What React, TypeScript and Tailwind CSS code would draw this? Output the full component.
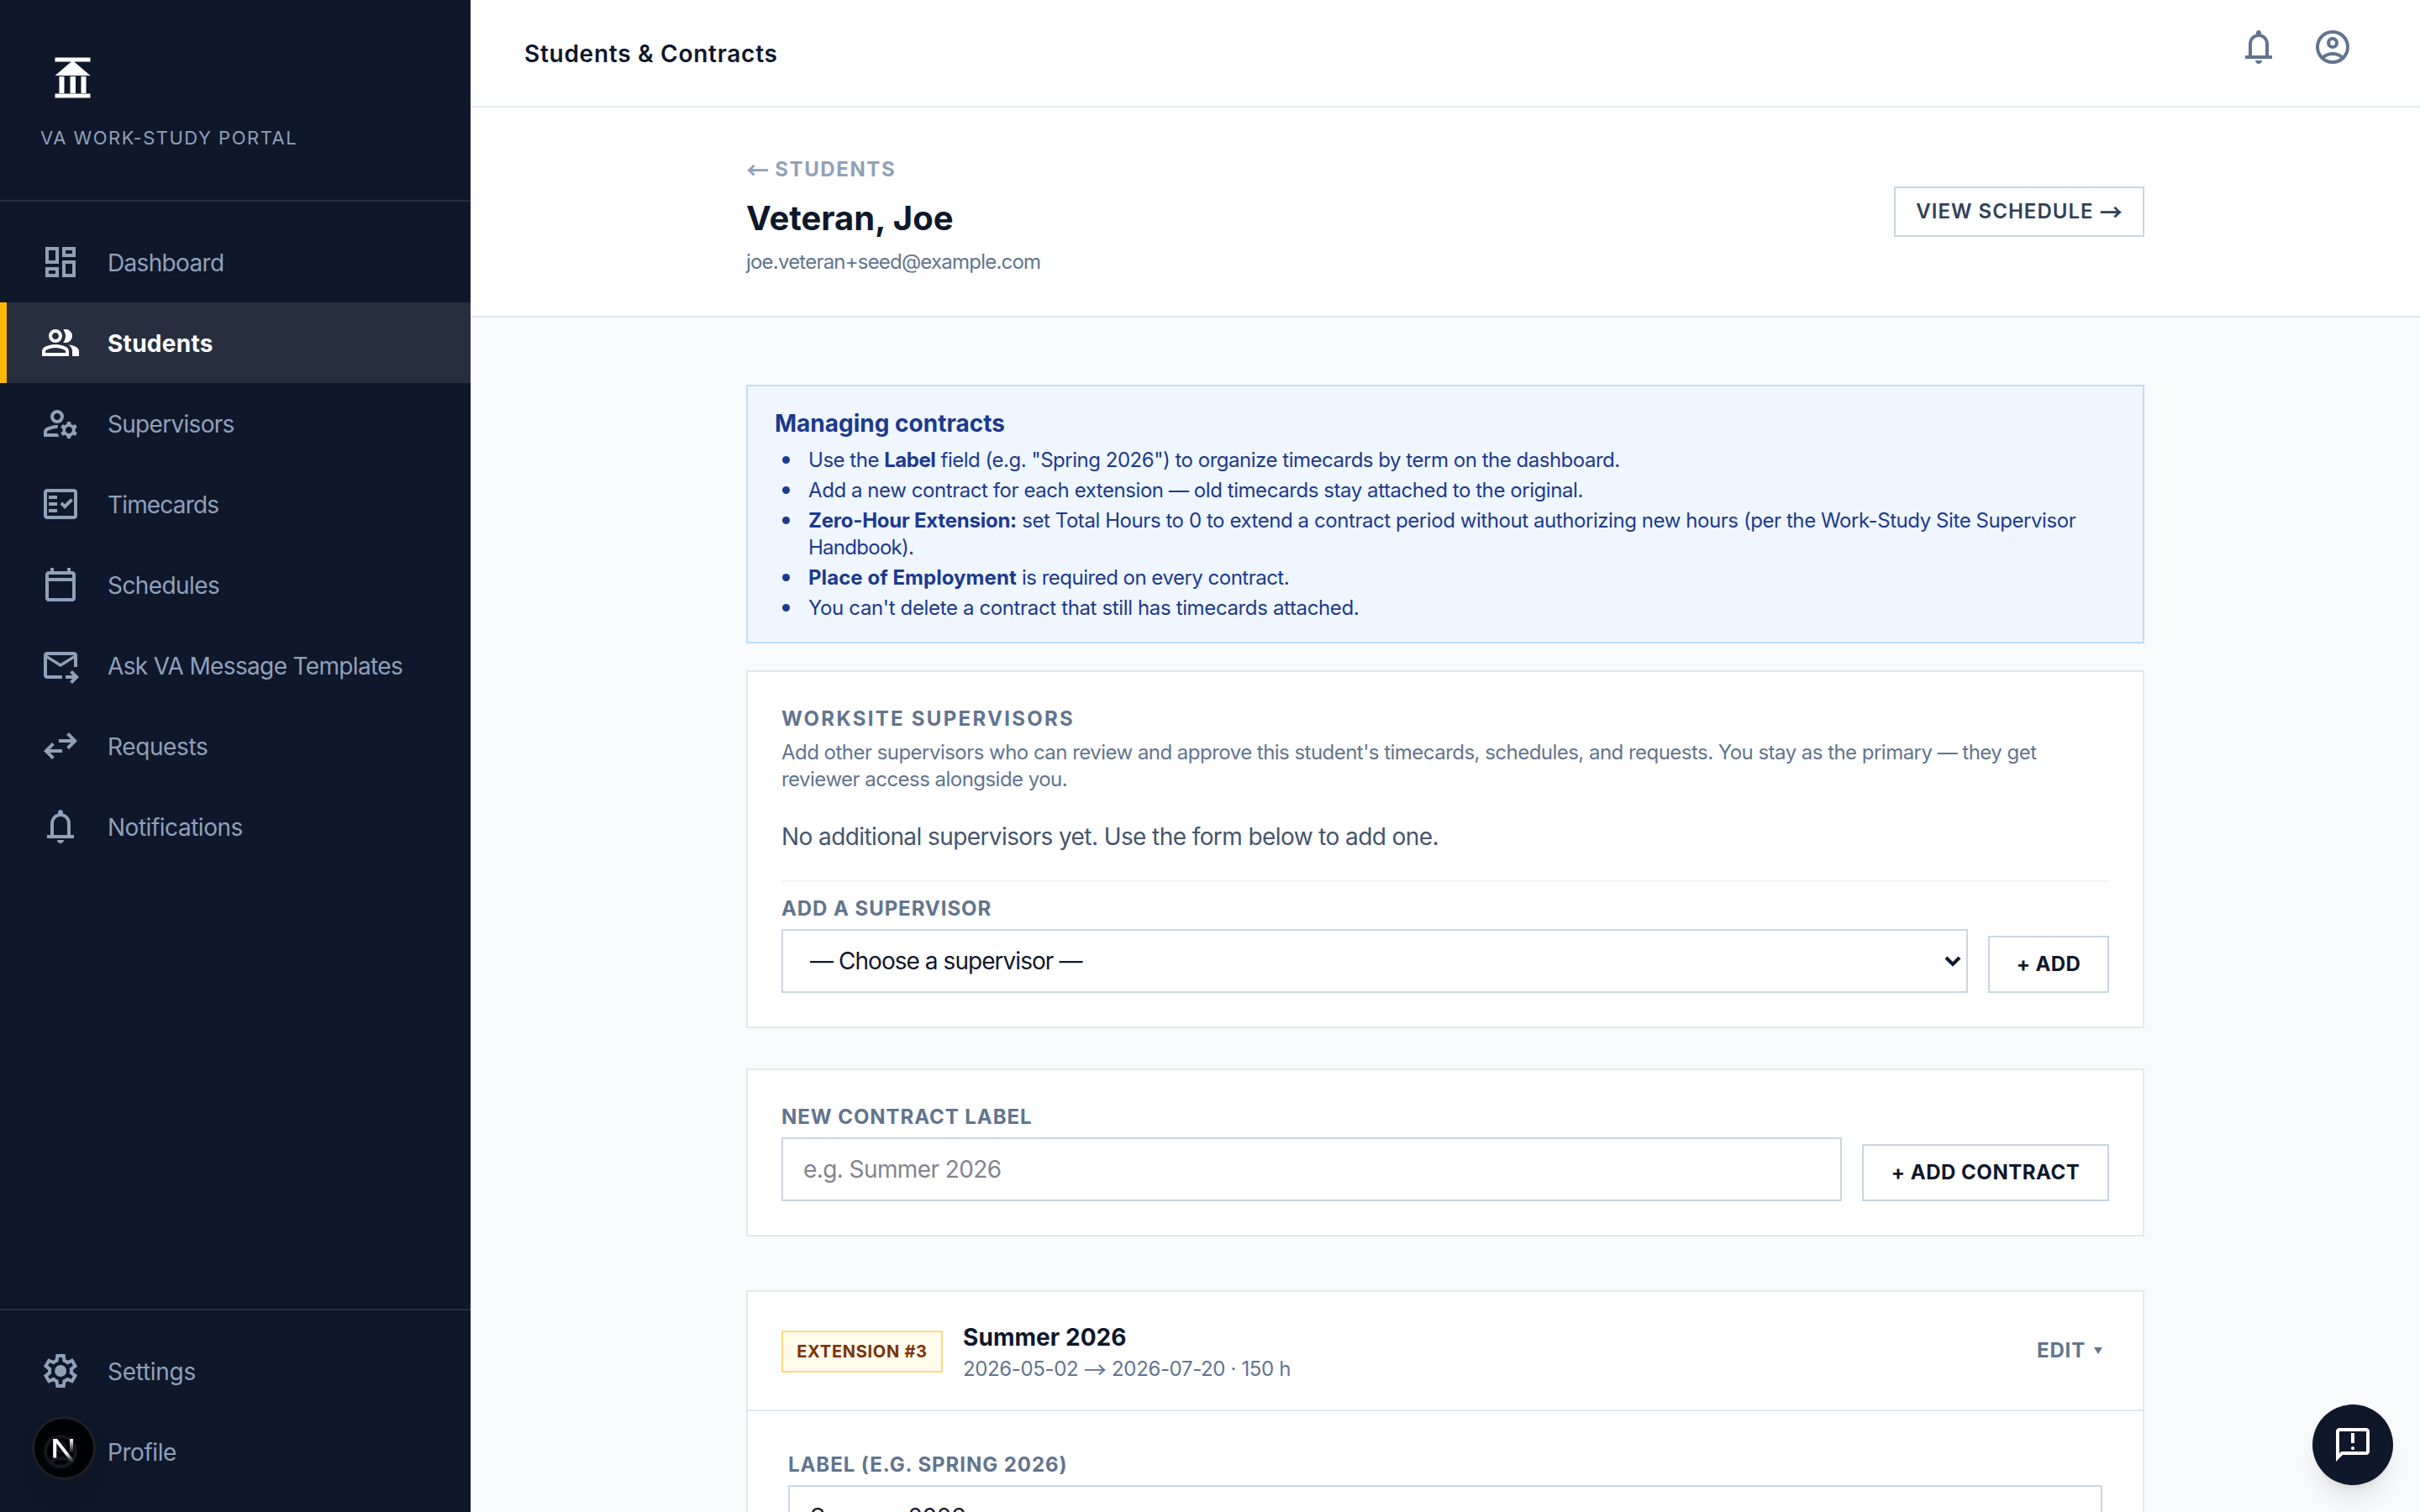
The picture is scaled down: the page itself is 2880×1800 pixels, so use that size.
import type { ReactNode } from "react";
import clsx from "clsx";

// Material Symbols paths, all drawn on the "0 -960 960 960" grid
const ICONS = {
  dashboard:
    "M520-600v-240h320v240H520ZM120-440v-400h320v400H120Zm400 320v-400h320v400H520Zm-400 0v-240h320v240H120Zm80-400h160v-240H200v240Zm400 320h160v-240H600v240Zm0-480h160v-80H600v80ZM200-200h160v-80H200v80Z",
  group:
    "M40-160v-112q0-34 17.5-62.5T104-378q62-31 126-46.5T360-440q66 0 130 15.5T616-378q29 15 46.5 43.5T680-272v112H40Zm720 0v-120q0-44-24.5-84.5T666-434q51 6 96 20.5t84 35.5q36 20 55 44.5t19 53.5v120H760ZM360-480q-66 0-113-47t-47-113q0-66 47-113t113-47q66 0 113 47t47 113q0 66-47 113t-113 47Zm400-160q0 66-47 113t-113 47q-11 0-28-2.5t-28-5.5q27-32 41.5-71t14.5-81q0-42-14.5-81T544-792q14-5 28-6.5t28-1.5q66 0 113 47t47 113ZM120-240h480v-32q0-11-5.5-20T580-306q-54-27-109-40.5T360-360q-56 0-111 13.5T140-306q-9 5-14.5 14t-5.5 20v32Zm240-320q33 0 56.5-23.5T440-640q0-33-23.5-56.5T360-720q-33 0-56.5 23.5T280-640q0 33 23.5 56.5T360-560Z",
  manageAccounts:
    "M400-480q-66 0-113-47t-47-113q0-66 47-113t113-47q66 0 113 47t47 113q0 66-47 113t-113 47ZM80-160v-112q0-33 17-62t47-44q51-26 115-44t141-18h14q6 0 12 2-8 18-13.5 37.5T404-360h-4q-71 0-127.5 18T180-306q-9 5-14.5 14t-5.5 20v32h252q6 21 16 41.5t22 38.5H80Zm560 40-12-60q-12-5-22.5-10.5T584-204l-58 18-40-68 46-40q-2-14-2-26t2-26l-46-40 40-68 58 18q11-8 21.5-13.5T628-460l12-60h80l12 60q12 5 22.5 11t21.5 15l58-20 40 70-46 40q2 12 2 25t-2 25l46 40-40 68-58-18q-11 8-21.5 13.5T732-180l-12 60h-80Zm40-120q33 0 56.5-23.5T760-320q0-33-23.5-56.5T680-400q-33 0-56.5 23.5T600-320q0 33 23.5 56.5T680-240ZM400-560q33 0 56.5-23.5T480-640q0-33-23.5-56.5T400-720q-33 0-56.5 23.5T320-640q0 33 23.5 56.5T400-560Z",
  factCheck:
    "M160-120q-33 0-56.5-23.5T80-200v-560q0-33 23.5-56.5T160-840h640q33 0 56.5 23.5T880-760v560q0 33-23.5 56.5T800-120H160Zm0-80h640v-560H160v560Zm40-80h200v-80H200v80Zm382-80 198-198-57-57-141 142-57-57-56 57 113 113Zm-382-80h200v-80H200v80Zm0-160h200v-80H200v80Z",
  calendar:
    "M200-80q-33 0-56.5-23.5T120-160v-560q0-33 23.5-56.5T200-800h40v-80h80v80h320v-80h80v80h40q33 0 56.5 23.5T840-720v560q0 33-23.5 56.5T760-80H200Zm0-80h560v-400H200v400Zm0-480h560v-80H200v80Z",
  forwardInbox:
    "M160-160q-33 0-56.5-23.5T80-240v-480q0-33 23.5-56.5T160-800h640q33 0 56.5 23.5T880-720v280h-80v-200L480-440 160-640v400h360v80H160Zm320-360 320-200H160l320 200ZM760-40l-56-56 63-64H600v-80h167l-64-64 57-56 160 160L760-40Z",
  syncAlt:
    "M280-160 80-360l200-200 56 57-103 103h287v80H233l103 103-56 57Zm400-240-56-57 103-103H440v-80h287L624-743l56-57 200 200-200 200Z",
  bell: "M160-200v-80h80v-280q0-83 50-147.5T420-792v-28q0-25 17.5-42.5T480-880q25 0 42.5 17.5T540-820v28q80 20 130 84.5T720-560v280h80v80H160Zm320 120q-33 0-56.5-23.5T400-160h160q0 33-23.5 56.5T480-80ZM320-280h320v-280q0-66-47-113t-113-47q-66 0-113 47t-47 113v280Z",
  settings:
    "m370-80-16-128q-13-5-24.5-12T307-235l-119 50L78-375l103-78q-1-7-1-13.5v-27q0-6.5 1-13.5L78-585l110-190 119 50q11-8 23-15t24-12l16-128h220l16 128q13 5 24.5 12t22.5 15l119-50 110 190-103 78q1 7 1 13.5v27q0 6.5-2 13.5l103 78-110 190-118-50q-11 8-23 15t-24 12L590-80H370Zm70-80h79l14-106q31-8 57.5-23.5T639-327l99 41 39-68-86-65q5-14 7-29.5t2-31.5q0-16-2-31.5t-7-29.5l86-65-39-68-99 42q-22-23-48.5-38.5T533-694l-13-106h-79l-14 106q-31 8-57.5 23.5T321-633l-99-41-39 68 86 64q-5 15-7 30t-2 32q0 16 2 31t7 30l-86 65 39 68 99-42q22 23 48.5 38.5T427-266l13 106Zm42-180q58 0 99-41t41-99q0-58-41-99t-99-41q-59 0-99.5 41T342-480q0 58 40.5 99t99.5 41Z",
  account:
    "M234-276q51-39 114-61.5T480-360q69 0 132 22.5T726-276q35-41 54.5-93T800-480q0-133-93.5-226.5T480-800q-133 0-226.5 93.5T160-480q0 59 19.5 111t54.5 93Zm246-164q-59 0-99.5-40.5T340-580q0-59 40.5-99.5T480-720q59 0 99.5 40.5T620-580q0 59-40.5 99.5T480-440Zm0 360q-83 0-156-31.5T197-197q-54-54-85.5-127T80-480q0-83 31.5-156T197-763q54-54 127-85.5T480-880q83 0 156 31.5T763-763q54 54 85.5 127T880-480q0 83-31.5 156T763-197q-54 54-127 85.5T480-80Zm0-80q53 0 100-15.5t86-44.5q-39-29-86-44.5T480-280q-53 0-100 15.5T294-220q39 29 86 44.5T480-160Zm0-360q26 0 43-17t17-43q0-26-17-43t-43-17q-26 0-43 17t-17 43q0 26 17 43t43 17Z",
  feedback:
    "M480-360q17 0 28.5-11.5T520-400q0-17-11.5-28.5T480-440q-17 0-28.5 11.5T440-400q0 17 11.5 28.5T480-360Zm-40-160h80v-240h-80v240ZM80-80v-720q0-33 23.5-56.5T160-880h640q33 0 56.5 23.5T880-800v480q0 33-23.5 56.5T800-240H240L80-80Zm126-240h594v-480H160v525l46-45Z",
};

type IconName = keyof typeof ICONS;

function Icon({ name }: { name: IconName }) {
  return (
    <svg viewBox="0 -960 960 960" className="size-12 shrink-0 fill-current">
      <path d={ICONS[name]} />
    </svg>
  );
}

const NAV: { label: string; icon: IconName; tracking: string }[] = [
  { label: "Dashboard", icon: "dashboard", tracking: "tracking-[-0.024em]" },
  { label: "Students", icon: "group", tracking: "tracking-[0.01em]" },
  { label: "Supervisors", icon: "manageAccounts", tracking: "tracking-[-0.025em]" },
  { label: "Timecards", icon: "factCheck", tracking: "tracking-[-0.03em]" },
  { label: "Schedules", icon: "calendar", tracking: "tracking-[-0.021em]" },
  { label: "Ask VA Message Templates", icon: "forwardInbox", tracking: "tracking-[-0.023em]" },
  { label: "Requests", icon: "syncAlt", tracking: "tracking-[-0.014em]" },
  { label: "Notifications", icon: "bell", tracking: "tracking-[-0.017em]" },
];

const FOOTER_NAV: { label: string; icon: IconName; tracking: string }[] = [
  { label: "Settings", icon: "settings", tracking: "tracking-[-0.01em]" },
  { label: "Profile", icon: "account", tracking: "tracking-[-0.016em]" },
];

function NavItem({ label, icon, tracking, active }: { label: string; icon: IconName; tracking: string; active?: boolean }) {
  return (
    <a
      className={clsx(
        "flex h-24 items-center gap-8 border-l-8 pl-10 text-[28px]",
        active ? "border-amber-400 bg-white/10 font-bold text-white" : "border-transparent text-slate-400"
      )}
    >
      <Icon name={icon} />
      <span className={clsx("pt-0.5", tracking)}>{label}</span>
    </a>
  );
}

function Sidebar() {
  return (
    <aside className="flex w-[560px] shrink-0 flex-col bg-slate-900">
      <div className="flex h-60 flex-col border-b-2 border-white/10 px-12 pt-[60px]">
        <svg viewBox="0 0 64 64" className="ml-1.5 size-16 fill-white">
          <rect x="11.5" y="8.5" width="42" height="5" />
          <path d="M32.5 12 53.5 30H11.5Z" />
          <rect x="16.5" y="31" width="6" height="20" />
          <rect x="29.5" y="31" width="6.5" height="20" />
          <rect x="42.5" y="31" width="6" height="20" />
          <rect x="11.5" y="51.5" width="42" height="5" />
        </svg>
        <p className="mt-6 text-[22px] leading-8 tracking-[0.068em] text-slate-400">VA WORK-STUDY PORTAL</p>
      </div>
      <nav className="flex-1 pt-6">
        {NAV.map((item) => (
          <NavItem key={item.label} {...item} active={item.label === "Students"} />
        ))}
      </nav>
      <div className="border-t-2 border-white/10 py-6">
        {FOOTER_NAV.map((item) => (
          <NavItem key={item.label} {...item} />
        ))}
      </div>
    </aside>
  );
}

function TopBar() {
  return (
    <header className="flex h-32 shrink-0 justify-between border-b-2 border-slate-200 bg-white pr-20 pl-16 text-slate-500">
      <h1 className="self-center pt-0.5 text-[28px] font-semibold tracking-[0.026em] text-slate-900">Students &amp; Contracts</h1>
      <div className="flex gap-10 pt-8">
        <Icon name="bell" />
        <Icon name="account" />
      </div>
    </header>
  );
}

// Inter's own arrows are too short, so borrow the full-width ones
function Arrow({ children }: { children: ReactNode }) {
  return (
    <span className="align-[-3px] font-['Noto_Sans_CJK_JP',sans-serif] text-[27px] leading-none tracking-normal">{children}</span>
  );
}

function PageHeader() {
  return (
    <section className="h-[250px] shrink-0 border-b-2 border-slate-200 bg-white">
      <div className="mx-auto flex w-[1664px] items-center justify-between pt-12">
        <div className="pt-2.5">
          <a className="block h-8 text-2xl leading-8 font-bold tracking-[0.066em] text-slate-400">
            <Arrow>←</Arrow> STUDENTS
          </a>
          <h2 className="mt-3.5 text-[40px] leading-[56px] font-bold text-slate-900">Veteran, Joe</h2>
          <p className="mt-2 text-2xl leading-8 tracking-[-0.033em] text-slate-500">joe.veteran+seed@example.com</p>
        </div>
        <button className="h-[60px] w-[298px] border-2 border-slate-300 text-2xl leading-8 font-semibold tracking-[0.043em] whitespace-nowrap text-slate-700">
          VIEW SCHEDULE <Arrow>→</Arrow>
        </button>
      </div>
    </section>
  );
}

function Tip({ className, children }: { className?: string; children: ReactNode }) {
  return (
    <li
      className={clsx(
        "before:mr-[22px] before:-ml-[31px] before:inline-block before:size-[9px] before:rounded-full before:bg-blue-900 before:align-[4px]",
        className
      )}
    >
      {children}
    </li>
  );
}

function ManagingInfo() {
  return (
    <div className="border-2 border-blue-200 bg-blue-50 px-8 py-6 text-blue-900">
      <h3 className="text-[28px] leading-10 font-bold">Managing contracts</h3>
      <ul className="mt-2 space-y-1 pl-10 text-2xl leading-8 tracking-[-0.018em]">
        <Tip className="tracking-[-0.02em]">
          Use the <b>Label</b> field (e.g. "Spring 2026") to organize timecards by term on the dashboard.
        </Tip>
        <Tip>Add a new contract for each extension — old timecards stay attached to the original.</Tip>
        <Tip>
          <b className="tracking-[-0.01em]">Zero-Hour Extension:</b> set Total Hours to 0 to extend a contract period without
          authorizing new hours (per the Work-Study Site Supervisor
          <br />
          <span className="tracking-[-0.03em]">Handbook).</span>
        </Tip>
        <Tip className="tracking-[-0.021em]">
          <b className="tracking-[0.002em]">Place of Employment</b> is required on every contract.
        </Tip>
        <Tip className="tracking-[-0.015em]">You can't delete a contract that still has timecards attached.</Tip>
      </ul>
    </div>
  );
}

function FieldLabel({ children }: { children: ReactNode }) {
  return <div className="mb-2 text-2xl leading-8 font-bold tracking-[0.039em] text-slate-500">{children}</div>;
}

function OutlineButton({ className, children }: { className: string; children: ReactNode }) {
  return (
    <button
      className={clsx(
        "flex h-[68px] shrink-0 items-center justify-center border-2 border-slate-300 bg-white text-2xl font-bold text-slate-900",
        className
      )}
    >
      {children}
    </button>
  );
}

function WorksiteSupervisors() {
  return (
    <div className="mt-8 border-2 border-slate-200 bg-white p-10">
      <h3 className="text-2xl leading-8 font-bold tracking-[0.095em] text-slate-500">WORKSITE SUPERVISORS</h3>
      <p className="mt-2 text-2xl leading-8 tracking-[-0.022em] text-slate-500">
        Add other supervisors who can review and approve this student's timecards, schedules, and requests. You stay as the
        primary — they get
        <br />
        reviewer access alongside you.
      </p>
      <p className="mt-8 text-[28px] leading-10 tracking-[-0.021em] text-slate-600">
        No additional supervisors yet. Use the form below to add one.
      </p>
      <div className="mt-8 flex items-end gap-6 border-t-2 border-slate-100 pt-4">
        <div className="flex-1">
          <FieldLabel>ADD A SUPERVISOR</FieldLabel>
          <div className="relative">
            <select className="block h-[76px] w-full appearance-none border-2 border-slate-300 bg-white pr-16 pl-8 text-[28px] tracking-[-0.034em] text-slate-900">
              <option>— Choose a supervisor —</option>
            </select>
            <svg viewBox="0 0 20 14" className="pointer-events-none absolute top-[31px] right-2 h-3.5 w-5 fill-none stroke-slate-900">
              <path d="m2 3 8 8 8-8" strokeWidth="4" />
            </svg>
          </div>
        </div>
        <OutlineButton className="w-36 tracking-[0.015em]">+ ADD</OutlineButton>
      </div>
    </div>
  );
}

function NewContract() {
  return (
    <div className="mt-12 flex items-end gap-6 border-2 border-slate-200 bg-white p-10">
      <div className="flex-1">
        <FieldLabel>NEW CONTRACT LABEL</FieldLabel>
        <input
          placeholder="e.g. Summer 2026"
          className="block h-[76px] w-full border-2 border-slate-300 px-6 text-[28px] tracking-[-0.021em] placeholder:text-[#84848e]"
        />
      </div>
      <OutlineButton className="w-[294px] tracking-[0.022em]">+ ADD CONTRACT</OutlineButton>
    </div>
  );
}

function ContractCard() {
  return (
    <div className="mt-16 border-2 border-slate-200 bg-white">
      <div className="flex h-[142px] items-center border-b-2 border-slate-200 px-10">
        <span className="mt-0.5 flex h-[50px] w-48 items-center justify-center border-2 border-[#fdda80] bg-amber-50 text-xl font-bold tracking-[0.036em] text-amber-900">
          EXTENSION #3
        </span>
        <div className="ml-6 flex-1 pt-0.5">
          <h3 className="text-[28px] leading-10 font-bold tracking-[0.002em] text-slate-900">Summer 2026</h3>
          <p className="mt-0.5 h-8 text-2xl leading-8 tracking-[-0.015em] text-slate-500">
            2026-05-02 <Arrow>→</Arrow> 2026-07-20 · 150 h
          </p>
        </div>
        <span className="flex items-center gap-2.5 text-2xl font-bold tracking-[0.035em] text-slate-500">
          EDIT
          <svg viewBox="0 0 10 8" className="mr-2 h-2 w-2.5 fill-current">
            <path d="M0 0h10L5 8Z" />
          </svg>
        </span>
      </div>
      <div className="p-12">
        <FieldLabel>LABEL (E.G. SPRING 2026)</FieldLabel>
        <input
          defaultValue="Summer 2026"
          className="block h-[76px] w-full border-2 border-slate-300 px-6 text-[28px] tracking-[-0.008em] text-slate-900"
        />
      </div>
    </div>
  );
}

function DevBadge() {
  return (
    <div className="absolute top-[1686px] left-[38px] size-[76px] rounded-full border-3 border-[#1f1f24] bg-black/85 shadow-[0_16px_32px_-8px_rgba(0,0,0,0.12)]">
      <svg viewBox="0 0 76 76" className="absolute -inset-[3px] size-[76px] fill-none">
        <defs>
          <linearGradient id="diag" x1="44" y1="42" x2="51" y2="53" gradientUnits="userSpaceOnUse">
            <stop stopColor="white" />
            <stop offset="1" stopColor="white" stopOpacity="0" />
          </linearGradient>
          <linearGradient id="stem" x1="0" y1="27" x2="0" y2="44" gradientUnits="userSpaceOnUse">
            <stop stopColor="white" />
            <stop offset="1" stopColor="white" stopOpacity="0" />
          </linearGradient>
        </defs>
        <path d="M27.2 49.5V27" stroke="white" strokeWidth="4" />
        <path d="M25.2 27h4.8L50 52.5 47 55Z" fill="url(#diag)" />
        <rect x="45" y="27" width="4" height="17" fill="url(#stem)" />
      </svg>
    </div>
  );
}

export default function App() {
  return (
    <div className="relative flex h-[1800px] w-[2880px] overflow-hidden bg-slate-50 font-['Inter',sans-serif] text-slate-900">
      <Sidebar />
      <div className="flex flex-1 flex-col">
        <TopBar />
        <PageHeader />
        <main className="mx-auto w-[1664px] pt-20">
          <ManagingInfo />
          <WorksiteSupervisors />
          <NewContract />
          <ContractCard />
        </main>
      </div>
      <DevBadge />
      <button className="absolute right-8 bottom-8 flex size-24 items-center justify-center rounded-full bg-slate-900 text-white shadow-[0_20px_30px_-6px_rgba(0,0,0,0.1),0_8px_12px_-8px_rgba(0,0,0,0.1)]">
        <Icon name="feedback" />
      </button>
    </div>
  );
}
